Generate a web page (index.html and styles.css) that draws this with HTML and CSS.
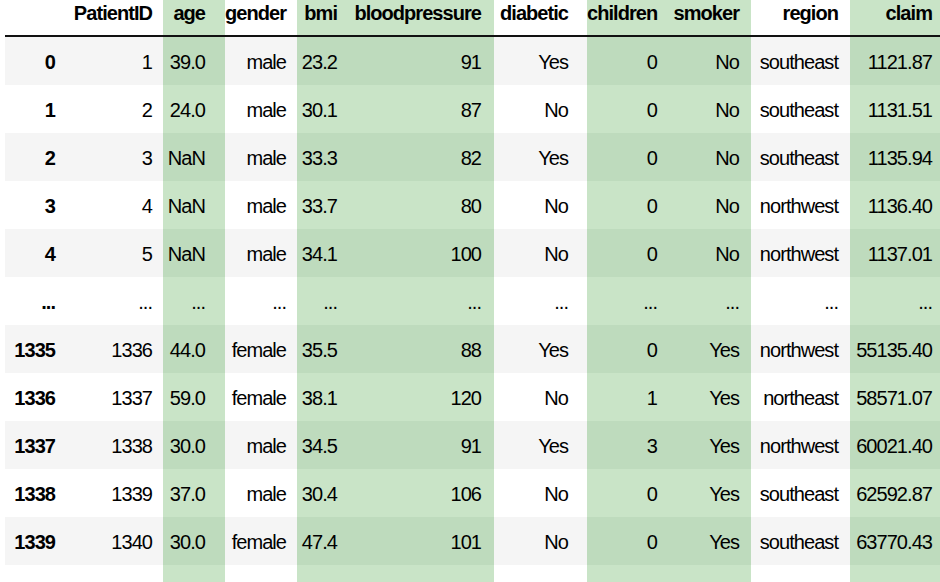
FILE: index.html
```html
<!DOCTYPE html>
<html lang="en">
<head>
<meta charset="utf-8">
<title>DataFrame</title>
<link rel="stylesheet" href="styles.css">
</head>
<body>
<table class="df">
  <colgroup>
    <col class="c-idx"><col class="c-pid"><col class="c-age"><col class="c-gen"><col class="c-bmi"><col class="c-bp"><col class="c-dia"><col class="c-chi"><col class="c-smo"><col class="c-reg"><col class="c-cla">
  </colgroup>
  <thead>
    <tr>
      <th></th><th>PatientID</th><th>age</th><th>gender</th><th>bmi</th><th>bloodpressure</th><th>diabetic</th><th>children</th><th>smoker</th><th>region</th><th>claim</th>
    </tr>
  </thead>
  <tbody>
    <tr><th>0</th><td>1</td><td>39.0</td><td>male</td><td>23.2</td><td>91</td><td>Yes</td><td>0</td><td>No</td><td>southeast</td><td>1121.87</td></tr>
    <tr><th>1</th><td>2</td><td>24.0</td><td>male</td><td>30.1</td><td>87</td><td>No</td><td>0</td><td>No</td><td>southeast</td><td>1131.51</td></tr>
    <tr><th>2</th><td>3</td><td>NaN</td><td>male</td><td>33.3</td><td>82</td><td>Yes</td><td>0</td><td>No</td><td>southeast</td><td>1135.94</td></tr>
    <tr><th>3</th><td>4</td><td>NaN</td><td>male</td><td>33.7</td><td>80</td><td>No</td><td>0</td><td>No</td><td>northwest</td><td>1136.40</td></tr>
    <tr><th>4</th><td>5</td><td>NaN</td><td>male</td><td>34.1</td><td>100</td><td>No</td><td>0</td><td>No</td><td>northwest</td><td>1137.01</td></tr>
    <tr><th>...</th><td>...</td><td>...</td><td>...</td><td>...</td><td>...</td><td>...</td><td>...</td><td>...</td><td>...</td><td>...</td></tr>
    <tr><th>1335</th><td>1336</td><td>44.0</td><td>female</td><td>35.5</td><td>88</td><td>Yes</td><td>0</td><td>Yes</td><td>northwest</td><td>55135.40</td></tr>
    <tr><th>1336</th><td>1337</td><td>59.0</td><td>female</td><td>38.1</td><td>120</td><td>No</td><td>1</td><td>Yes</td><td>northeast</td><td>58571.07</td></tr>
    <tr><th>1337</th><td>1338</td><td>30.0</td><td>male</td><td>34.5</td><td>91</td><td>Yes</td><td>3</td><td>Yes</td><td>northwest</td><td>60021.40</td></tr>
    <tr><th>1338</th><td>1339</td><td>37.0</td><td>male</td><td>30.4</td><td>106</td><td>No</td><td>0</td><td>Yes</td><td>southeast</td><td>62592.87</td></tr>
    <tr><th>1339</th><td>1340</td><td>30.0</td><td>female</td><td>47.4</td><td>101</td><td>No</td><td>0</td><td>Yes</td><td>southeast</td><td>63770.43</td></tr>
  </tbody>
  <tfoot>
    <tr><td></td><td></td><td></td><td></td><td></td><td></td><td></td><td></td><td></td><td></td><td></td></tr>
  </tfoot>
</table>
</body>
</html>
```

FILE: styles.css
```css
html, body {
  margin: 0;
  padding: 0;
  background: #ffffff;
}

body {
  font-family: "Liberation Sans", Arial, Helvetica, sans-serif;
  font-size: 20px;
  color: #000000;
  overflow: hidden;
}

.df {
  margin-left: 5px;
  border-collapse: collapse;
  border-spacing: 0;
  table-layout: fixed;
  width: 935px;
  letter-spacing: -0.95px;
}

.c-idx { width: 61px; }
.c-pid { width: 97px; }
.c-age { width: 62px; }
.c-gen { width: 72px; }
.c-bmi { width: 53px; }
.c-bp  { width: 144px; }
.c-dia { width: 93px; }
.c-chi { width: 81px; }
.c-smo { width: 83px; }
.c-reg { width: 99px; }
.c-cla { width: 90px; }

.df th,
.df td {
  padding: 0 11px 0 0;
  text-align: right;
  white-space: nowrap;
  overflow: visible;
}

.df th {
  font-weight: bold;
}

.df td {
  font-weight: normal;
}

/* header row */
.df thead th {
  height: 35px;
  line-height: 27px;
  vertical-align: top;
  padding-top: 0;
  border-bottom: 2px solid #111111;
}

/* body rows */
.df tbody th,
.df tbody td {
  height: 48px;
  line-height: 45px;
  padding-top: 3px;
  vertical-align: top;
  box-sizing: border-box;
}

.df tbody tr:nth-child(odd) > * {
  background: #f5f5f5;
}

.df tr > :nth-child(3)  { padding-right: 20px; }
.df tr > :nth-child(5)  { padding-right: 13px; }
.df tr > :nth-child(6)  { padding-right: 13px; }
.df tr > :nth-child(7)  { padding-right: 19px; }
.df tr > :nth-child(9)  { padding-right: 12px; }
.df tr > :nth-child(10) { padding-right: 12px; }
.df tr > :nth-child(11) { padding-right: 8px; }

/* highlighted columns */
.df tr > :nth-child(3),
.df tr > :nth-child(5),
.df tr > :nth-child(6),
.df tr > :nth-child(8),
.df tr > :nth-child(9),
.df tr > :nth-child(11) {
  background: #c9e4c7;
}

.df tbody tr:nth-child(odd) > :nth-child(3),
.df tbody tr:nth-child(odd) > :nth-child(5),
.df tbody tr:nth-child(odd) > :nth-child(6),
.df tbody tr:nth-child(odd) > :nth-child(8),
.df tbody tr:nth-child(odd) > :nth-child(9),
.df tbody tr:nth-child(odd) > :nth-child(11) {
  background: #bedbbd;
}

.df tfoot td {
  height: 17px;
  padding: 0;
  line-height: 17px;
}
```
